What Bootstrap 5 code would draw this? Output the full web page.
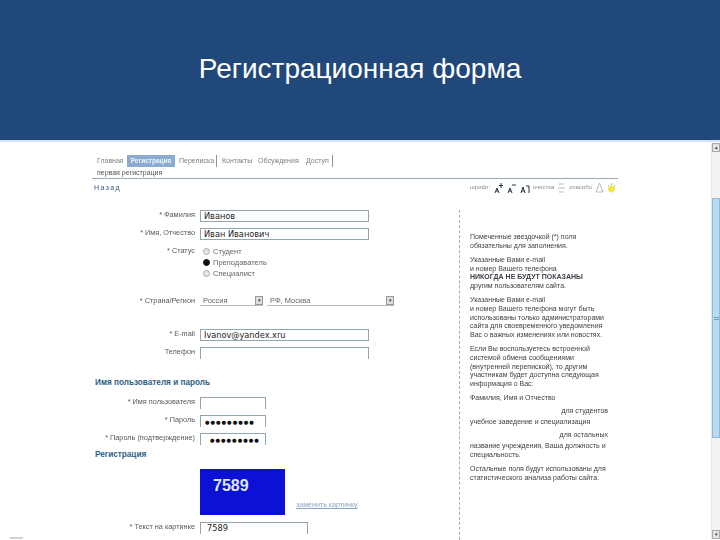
<!DOCTYPE html>
<html lang="ru">
<head>
<meta charset="utf-8">
<title>Регистрационная форма</title>
<link rel="stylesheet" href="https://cdn.jsdelivr.net/npm/bootstrap@5.3.0/dist/css/bootstrap.min.css">
<style>
html,body{height:540px;overflow:hidden;background:#fff}
body{font-family:"Liberation Sans",Arial,sans-serif;color:#33363c}
.hero{height:140px;background:#20487a;color:#fff;font-size:28px;line-height:32px;padding-top:53px;text-align:center}
.shot{height:400px;border-top:2px solid #d3e3f7;padding-left:92px;font-size:7px;line-height:10px;overflow:hidden}
.shot-main{width:526px;flex:none}
.tabs{height:14px;margin-top:13px;padding-left:5px;color:#7d8186;font-size:7px}
.tabs span{display:block;line-height:12px;height:12px}
.tabs .t1{width:30px}
.tabs .on{width:48px;background:#8cabd0;color:#eef4fb;font-weight:700;font-size:6.5px;text-align:center}
.tabs .t3{width:42px;padding-left:4px;border-right:1px solid #8a9399}
.tabs .t4{width:41px;padding-left:5px}
.tabs .t5{width:48px}
.tabs .t6{width:27px;border-right:1px solid #8a9399}
.subnav{height:8px;padding-left:5px;font-size:7px;line-height:8px;color:#555}
.rule{border-top:1px solid #98a8b5;margin-top:1px}
.tools{height:15px;line-height:13px;padding-top:2px}
.back{color:#34557f;padding-left:2px;letter-spacing:1.4px}
.tool-txt{color:#8a8f95;font-size:6px;gap:3px;margin-right:2px}
.columns{margin-top:16px}
.form-col{width:367px;flex:none}
.frow{display:flex;margin-bottom:6px}
.lab{width:103px;flex:none;text-align:right;color:#55595f;font-size:7.3px;line-height:10px;white-space:nowrap}
.ctl{margin-left:5px}
.inp{width:169px;height:12px;border:1px solid #8fa5b0;font-size:8.2px;line-height:11px;color:#222;padding-left:3px;font-family:"DejaVu Sans",sans-serif;white-space:nowrap}
.open{border-bottom:0}
.short{width:66px}
.cap-in{width:108px;padding-left:6px}
.radios{padding-left:3px}
.radio-line{height:11px;line-height:11px;color:#666;display:flex;align-items:center;gap:3px;font-size:7.5px}
.dot{width:7px;height:7px;border-radius:50%;border:1px solid #aaa;background:#e6e6e6}
.dot.sel{background:#111;border-color:#111}
.status-row{margin-bottom:17px}
.sel-box{height:10px;border-bottom:1px solid #b5bcc2;color:#666;font-size:7.5px;line-height:10px;display:flex;justify-content:space-between;padding-left:3px}
.sel-a{width:63px}
.sel-b{width:127px}
.arr{width:8px;height:9px;border:1px solid #999;background:#ddd;color:#333;font-size:5px;line-height:7px;text-align:center}
.gap-country{margin-bottom:23px}
.sec{font-weight:700;font-size:8.2px;line-height:10px;color:#2c5f86;padding-left:3px}
.sec-user{margin-top:19px;margin-bottom:9px}
.sec-reg{margin-top:-1px;margin-bottom:9px}
.dots{font-size:5.200px;letter-spacing:1px;color:#111;line-height:13px;padding-left:4px;font-family:"DejaVu Sans",sans-serif}
.dots-b{padding-left:9px}
.cap-row{margin-bottom:7px}
.cap-img{width:85px;height:46px;background:#0b12d6;color:#dfe6ff;font-weight:700;font-size:16px;line-height:18px;padding:8px 0 0 13px}
.cap-link{color:#8aa5c4;text-decoration:underline;font-size:7.1px;margin-left:11px;margin-bottom:3px;align-self:flex-end;line-height:13px}
.note-col{width:159px;flex:none;border-left:1px dashed #aab;padding-left:10px;padding-top:23px;min-height:330px;color:#3c3f46;font-size:7px;line-height:8.7px;white-space:nowrap}
.note-col p{margin:0 0 5.500px;filter:blur(.3px)}
.note-col p.note-r{text-align:right;margin:-1px 10px 2px 0}
.tabs span,.subnav,.back,.tool-txt,.lab,.radio-line,.sel-box span:first-child,.cap-link{filter:blur(.3px)}
.scroll{position:absolute;top:143px;right:0;width:9px;height:396px;background:#f3f3f3;display:flex;flex-direction:column;border-left:1px solid #e6e6e6}
.scroll-btn{height:9px;background:#e4e4e4;border:1px solid #aaa;font-size:5px;line-height:7px;text-align:center;color:#333;flex:none}
.thumb{height:240px;margin-top:46px;background:#b9dcf2;border:1px solid #8fb9db;flex:none;display:flex;align-items:center;justify-content:center}
.grip{width:5px;height:3px;border-top:1px solid #6f9cc0;border-bottom:1px solid #6f9cc0}
.corner{position:absolute;left:10px;bottom:1px;width:13px;height:2px;background:#ccd3da}
</style>
</head>
<body>
<div class="hero">Регистрационная форма</div>
<div class="shot">
  <div class="shot-main">
    <div class="tabs d-flex">
      <span class="t1">Главная</span><span class="on">Регистрация</span><span class="t3">Переписка</span><span class="t4">Контакты</span><span class="t5">Обсуждения</span><span class="t6">Доступ</span>
    </div>
    <div class="subnav">первая регистрация</div>
    <div class="rule"></div>
    <div class="tools d-flex justify-content-between">
      <span class="back">Назад</span>
      <span class="d-flex align-items-center tool-txt">
        <span>шрифт:</span>
        <svg width="10" height="12" viewBox="0 0 10 12"><path d="M1 11 3 6l2 5M2 9h2M7 1v5M5 3.500h4" fill="none" stroke="#234" stroke-width="1"/></svg>
        <svg width="10" height="12" viewBox="0 0 10 12"><path d="M1 11 3 6l2 5M2 9h2M5 3h4" fill="none" stroke="#234" stroke-width="1"/></svg>
        <svg width="10" height="12" viewBox="0 0 10 12"><path d="M1 11 3 5l2 6M2 9h2M6 4h3v7" fill="none" stroke="#234" stroke-width="1"/></svg>
        <span>очистка</span>
        <svg width="9" height="12" viewBox="0 0 9 12"><path d="M2 2h5M1 6h7M2 10h5" fill="none" stroke="#aaa" stroke-width=".8"/></svg>
        <span>спасибо</span>
        <svg width="9" height="12" viewBox="0 0 9 12"><path d="M4.500 1 8 10H1z" fill="none" stroke="#aaa" stroke-width=".8"/></svg>
        <svg width="9" height="12" viewBox="0 0 9 12"><circle cx="4.500" cy="7" r="3.500" fill="#f2e84c"/><path d="M4.500 1v2M1 3l1 1M8 3 7 4" stroke="#999" stroke-width=".7"/></svg>
      </span>
    </div>
    <div class="columns d-flex">
      <div class="form-col">
        <div class="frow"><div class="lab">* Фамилия</div><div class="ctl inp">Иванов</div></div>
        <div class="frow"><div class="lab">* Имя, Отчество</div><div class="ctl inp">Иван Иванович</div></div>
        <div class="frow status-row">
          <div class="lab">* Статус</div>
          <div class="ctl radios">
            <div class="radio-line"><span class="dot"></span>Студент</div>
            <div class="radio-line"><span class="dot sel"></span>Преподаватель</div>
            <div class="radio-line"><span class="dot"></span>Специалист</div>
          </div>
        </div>
        <div class="frow gap-country">
          <div class="lab">* Страна/Регион</div>
          <div class="ctl d-flex gap-1">
            <div class="sel-box sel-a"><span>Россия</span><span class="arr">▾</span></div>
            <div class="sel-box sel-b"><span>РФ, Москва</span><span class="arr">▾</span></div>
          </div>
        </div>
        <div class="frow"><div class="lab">* E-mail</div><div class="ctl inp">Ivanov@yandex.xru</div></div>
        <div class="frow mb-0"><div class="lab">Телефон</div><div class="ctl inp open"></div></div>
        <div class="sec sec-user">Имя пользователя и пароль</div>
        <div class="frow"><div class="lab">* Имя пользователя</div><div class="ctl inp open short"></div></div>
        <div class="frow"><div class="lab">* Пароль</div><div class="ctl inp open short dots">●●●●●●●●●</div></div>
        <div class="frow"><div class="lab">* Пароль (подтверждение)</div><div class="ctl inp open short dots dots-b">●●●●●●●●●</div></div>
        <div class="sec sec-reg">Регистрация</div>
        <div class="frow cap-row"><div class="lab"></div><div class="ctl cap-img">7589</div><a class="cap-link">заменить картинку</a></div>
        <div class="frow"><div class="lab">* Текст на картинке</div><div class="ctl inp open cap-in">7589</div></div>
      </div>
      <div class="note-col">
        <p>Помеченные звездочкой (*) поля<br>обязательны для заполнения.</p>
        <p>Указанные Вами e-mail<br>и номер Вашего телефона<br><b>НИКОГДА НЕ БУДУТ ПОКАЗАНЫ</b><br>другим пользователям сайта.</p>
        <p>Указанные Вами e-mail<br>и номер Вашего телефона могут быть<br>использованы только администраторами<br>сайта для своевременного уведомления<br>Вас о важных изменениях или новостях.</p>
        <p>Если Вы воспользуетесь встроенной<br>системой обмена сообщениями<br>(внутренней перепиской), то другим<br>участникам будет доступна следующая<br>информация о Вас:</p>
        <p>Фамилия, Имя и Отчество</p>
        <p class="note-r">для студентов</p>
        <p>учебное заведение и специализация</p>
        <p class="note-r">для остальных</p>
        <p>название учреждения, Ваша должность и<br>специальность.</p>
        <p>Остальные поля будут использованы для<br>статистического анализа работы сайта.</p>
      </div>
    </div>
  </div>
</div>
<div class="scroll">
  <div class="scroll-btn">▴</div>
  <div class="thumb"><span class="grip"></span></div>
  <div class="flex-grow-1"></div>
  <div class="scroll-btn">▾</div>
</div>
<div class="corner"></div>
</body>
</html>
